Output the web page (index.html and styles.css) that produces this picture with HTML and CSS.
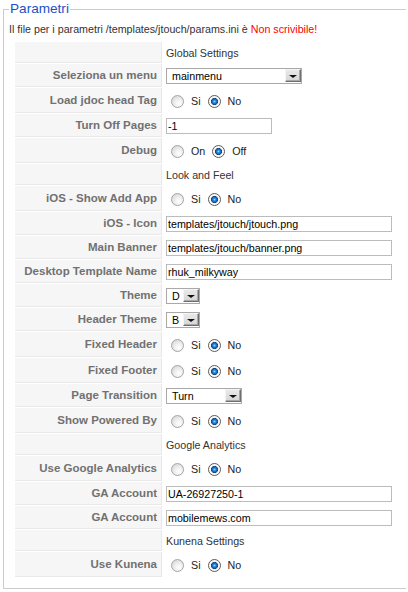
FILE: index.html
```html
<!DOCTYPE html>
<html lang="it">
<head>
<meta charset="utf-8">
<title>Parametri</title>
<link rel="stylesheet" href="styles.css">
</head>
<body>
<fieldset class="params">
  <legend>Parametri</legend>
  <p class="note">Il file per i parametri /templates/jtouch/params.ini è <span class="warn">Non scrivibile!</span></p>
  <table class="paramlist">
    <tr class="row-title"><td class="key"></td><td class="val">Global Settings</td></tr>
    <tr class="row-input"><td class="key">Seleziona un menu</td><td class="val"><span class="sel w-menu"><span class="sel-text">mainmenu</span><span class="sel-btn"></span></span></td></tr>
    <tr class="row-radio"><td class="key">Load jdoc head Tag</td><td class="val"><label class="opt"><input type="radio" class="rb" name="jdoc">Si</label><label class="opt"><input type="radio" class="rb" name="jdoc" checked>No</label></td></tr>
    <tr class="row-input"><td class="key">Turn Off Pages</td><td class="val"><input type="text" class="txt w-short" value="-1"></td></tr>
    <tr class="row-radio"><td class="key">Debug</td><td class="val"><label class="opt"><input type="radio" class="rb" name="debug">On</label><label class="opt"><input type="radio" class="rb" name="debug" checked>Off</label></td></tr>
    <tr class="row-title"><td class="key"></td><td class="val">Look and Feel</td></tr>
    <tr class="row-radio"><td class="key">iOS - Show Add App</td><td class="val"><label class="opt"><input type="radio" class="rb" name="addapp">Si</label><label class="opt"><input type="radio" class="rb" name="addapp" checked>No</label></td></tr>
    <tr class="row-input"><td class="key">iOS - Icon</td><td class="val"><input type="text" class="txt w-long" value="templates/jtouch/jtouch.png"></td></tr>
    <tr class="row-input"><td class="key">Main Banner</td><td class="val"><input type="text" class="txt w-long" value="templates/jtouch/banner.png"></td></tr>
    <tr class="row-input"><td class="key">Desktop Template Name</td><td class="val"><input type="text" class="txt w-long" value="rhuk_milkyway"></td></tr>
    <tr class="row-input"><td class="key">Theme</td><td class="val"><span class="sel w-tiny"><span class="sel-text">D</span><span class="sel-btn"></span></span></td></tr>
    <tr class="row-input"><td class="key">Header Theme</td><td class="val"><span class="sel w-tiny"><span class="sel-text">B</span><span class="sel-btn"></span></span></td></tr>
    <tr class="row-radio"><td class="key">Fixed Header</td><td class="val"><label class="opt"><input type="radio" class="rb" name="fhead">Si</label><label class="opt"><input type="radio" class="rb" name="fhead" checked>No</label></td></tr>
    <tr class="row-radio"><td class="key">Fixed Footer</td><td class="val"><label class="opt"><input type="radio" class="rb" name="ffoot">Si</label><label class="opt"><input type="radio" class="rb" name="ffoot" checked>No</label></td></tr>
    <tr class="row-input"><td class="key">Page Transition</td><td class="val"><span class="sel w-trans"><span class="sel-text">Turn</span><span class="sel-btn"></span></span></td></tr>
    <tr class="row-radio"><td class="key">Show Powered By</td><td class="val"><label class="opt"><input type="radio" class="rb" name="powered">Si</label><label class="opt"><input type="radio" class="rb" name="powered" checked>No</label></td></tr>
    <tr class="row-title"><td class="key"></td><td class="val">Google Analytics</td></tr>
    <tr class="row-radio"><td class="key">Use Google Analytics</td><td class="val"><label class="opt"><input type="radio" class="rb" name="ga">Si</label><label class="opt"><input type="radio" class="rb" name="ga" checked>No</label></td></tr>
    <tr class="row-input"><td class="key">GA Account</td><td class="val"><input type="text" class="txt w-long" value="UA-26927250-1"></td></tr>
    <tr class="row-input"><td class="key">GA Account</td><td class="val"><input type="text" class="txt w-long" value="mobilemews.com"></td></tr>
    <tr class="row-title"><td class="key"></td><td class="val">Kunena Settings</td></tr>
    <tr class="row-radio"><td class="key">Use Kunena</td><td class="val"><label class="opt"><input type="radio" class="rb" name="kunena">Si</label><label class="opt"><input type="radio" class="rb" name="kunena" checked>No</label></td></tr>
  </table>
</fieldset>
</body>
</html>
```
FILE: styles.css
```css
html, body {
  margin: 0;
  padding: 0;
  background: #fff;
}

body {
  font-family: "Liberation Sans", Arial, sans-serif;
  font-size: 10.7px;
  color: #333;
}

.params {
  margin: 2px 2px 0 3px;
  padding: 0 0 10px 5px;
  border: 1px solid #ccc;
  border-right: 0;
  min-width: 0;
}

.params legend {
  padding: 0 1px;
  font-size: 13.6px;
  line-height: 14px;
  color: #1a52c6;
}

.note {
  margin: 7px 0 5px 0;
  line-height: 13px;
  color: #333;
}

.warn {
  color: #f00;
}

.paramlist {
  margin-left: 5px;
  border-collapse: separate;
  border-spacing: 1px;
  width: 392px;
}

.paramlist td {
  box-sizing: border-box;
  padding: 0;
  vertical-align: middle;
  line-height: 14px;
}

.paramlist td.key {
  width: 147px;
  padding-right: 4px;
  text-align: right;
  font-weight: bold;
  font-size: 11.5px;
  color: #717171;
  background: #f6f6f6;
  border-bottom: 1px solid #e9e9e9;
  border-right: 1px solid #e9e9e9;
  white-space: nowrap;
}

.paramlist td.val {
  padding-left: 3px;
  white-space: nowrap;
}

.row-title td.key { height: 21px; }
.row-input td.key { height: 23px; }
.row-radio td.key { height: 25px; }
.row-radio td.val { padding-top: 4px; }

/* text inputs */
.txt {
  box-sizing: border-box;
  display: block;
  height: 16px;
  margin: 0;
  padding: 0 1px;
  border: 1px solid #bcbcbc;
  font-family: "Liberation Sans", Arial, sans-serif;
  font-size: 10.7px;
  line-height: 14px;
  color: #000;
  background: #fff;
  outline: none;
}

.w-short { width: 106px; }
.w-long { width: 226px; }

/* select boxes */
.sel {
  box-sizing: border-box;
  display: flex;
  align-items: center;
  height: 16px;
  padding: 1px 0;
  border: 1px solid #a9a9a9;
  background: #fff;
  color: #000;
}

.w-menu { width: 136px; }
.w-tiny { width: 34px; }
.w-trans { width: 76px; }

.sel-text {
  flex: 1;
  padding-left: 5px;
  line-height: 12px;
}

.sel-btn {
  position: relative;
  box-sizing: border-box;
  width: 16px;
  height: 13px;
  border: 1px solid;
  border-color: #f4f4f4 #6f6f6f #6f6f6f #f4f4f4;
  background: linear-gradient(#e9e9e9, #d6d6d6);
  box-shadow: inset -1px -1px 0 #a8a8a8;
}

.sel-btn::after {
  content: "";
  position: absolute;
  left: 3px;
  top: 5px;
  width: 0;
  height: 0;
  border-left: 4px solid transparent;
  border-right: 4px solid transparent;
  border-top: 3px solid #111;
}

/* radios */
.opt {
  display: inline-flex;
  align-items: center;
  height: 14px;
  margin-right: 2px;
  color: #222;
}

.rb {
  -webkit-appearance: none;
  appearance: none;
  box-sizing: border-box;
  width: 13px;
  height: 13px;
  margin: 0 7px 0 5px;
  border-radius: 50%;
  border: 1px solid #a4a4a4;
  background: radial-gradient(circle at 62% 68%, #ffffff 0, #f4f4f4 30%, #d9d9d9 80%, #cfcfcf 100%);
}

.rb:checked {
  border-color: #5a5a5a;
  background: radial-gradient(circle at 50% 50%, #9fdcff 0, #2a95e0 1.2px, #0c5aa8 2.8px, #1a3f6e 3.3px, #f2f2f2 3.8px, #ffffff 5.5px);
}
```
